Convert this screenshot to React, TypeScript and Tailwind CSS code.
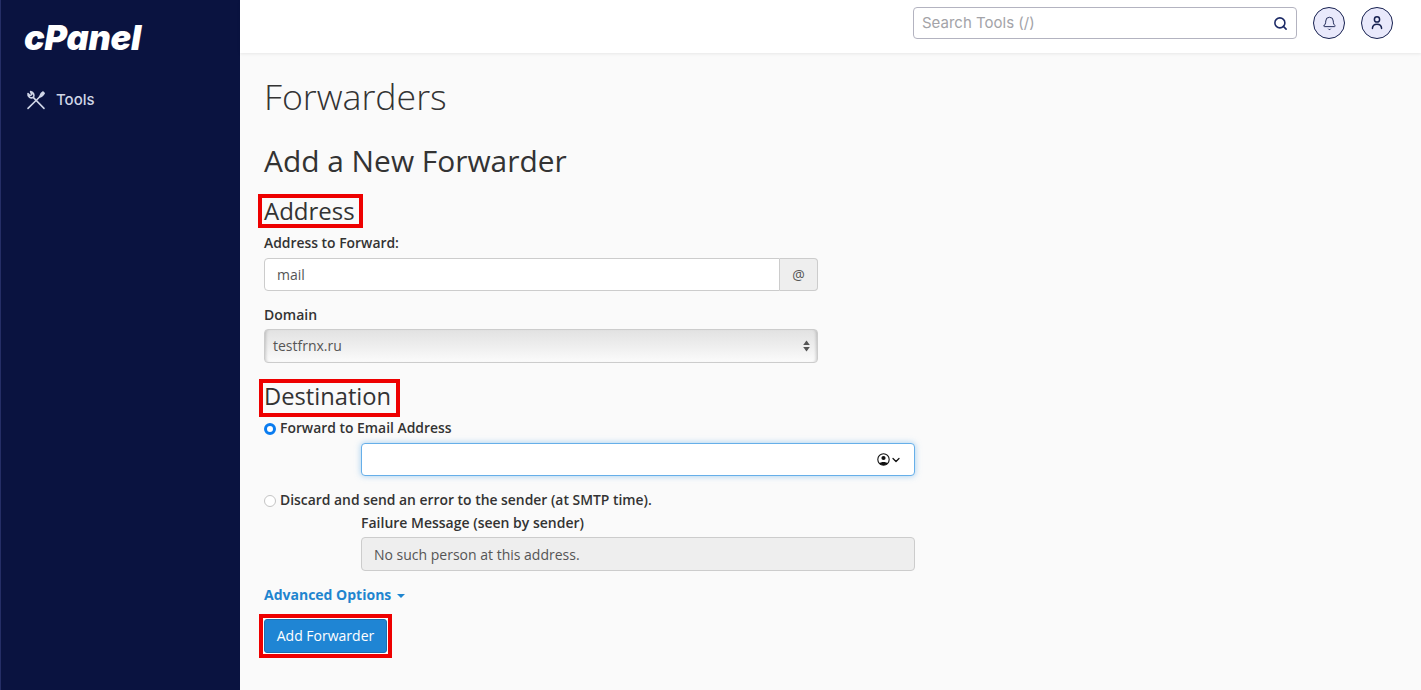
import { Search, Bell, ChevronDown } from "lucide-react";

const openSans = "font-['Open_Sans',sans-serif]";

function ToolsIcon() {
  return (
    <svg width="20" height="20" viewBox="0 0 20 20" fill="none" stroke="#cfd5e6" strokeWidth="1.6" strokeLinecap="round" strokeLinejoin="round">
      <path d="M7.2 7.4 L18 18.4" />
      <path d="M2 3.6 C1.4 7 5 8.8 7.2 7.4 C8.8 5.8 7.8 2.2 4.6 1.6 L5.8 4.6 L4 5.6 Z" />
      <path d="M2 18.4 L13.6 7" />
      <path d="M13.6 7 C14 4.6 15.4 2.8 17 2 L18.2 3.2 C17.4 5 15.8 6.6 13.6 7 Z" fill="#cfd5e6" />
    </svg>
  );
}

function UserIcon() {
  return (
    <svg width="16" height="16" viewBox="0 0 16 16" fill="none" stroke="#16204f" strokeWidth="1.5" strokeLinecap="round">
      <circle cx="8" cy="4.4" r="2.6" />
      <path d="M3.4 13.4 C3.6 10.2 5.4 9.2 8 9.2 C10.6 9.2 12.4 10.2 12.6 13.4" />
    </svg>
  );
}

function ContactIcon() {
  return (
    <svg width="13" height="13" viewBox="0 0 13 13">
      <circle cx="6.5" cy="6.5" r="5.7" fill="none" stroke="#111" strokeWidth="1.1" />
      <circle cx="6.5" cy="5" r="2.1" fill="#111" />
      <path d="M2.4 10.4 C3.4 8.4 9.6 8.4 10.6 10.4 C9 12.4 4 12.4 2.4 10.4 Z" fill="#111" />
    </svg>
  );
}

function Highlighted({ children, className }: { children: React.ReactNode; className: string }) {
  return <div className={`border-4 border-[#ee0000] ${className}`}>{children}</div>;
}

export default function App() {
  return (
    <div className={`flex h-[690px] w-[1421px] overflow-hidden bg-[#fafafa] ${openSans}`}>
      <aside className="w-[240px] shrink-0 border-l border-[#252e66] bg-[#0a1340] pl-[23px] font-['Inter',sans-serif]">
        <div className="mt-[18px] h-10 text-[34.4px] leading-10 font-black italic tracking-[-0.2px] text-white">cPanel</div>
        <div className="mt-[32px] flex h-5 items-center gap-[10px] pl-[2px] text-[15px] font-medium text-[#cfd5e6]">
          <ToolsIcon />
          <span>Tools</span>
        </div>
      </aside>

      <div className="flex min-w-0 flex-1 flex-col">
        <header className="flex h-[53px] shrink-0 items-center justify-end bg-white pr-7 pb-[7px] font-['Inter',sans-serif] shadow-[0_1px_3px_rgba(0,0,0,0.08)]">
          <div className="flex h-[32px] w-[384px] items-center justify-between rounded-[4px] border border-[#b3b3c0] pt-px pr-2 pl-2 text-[15px] text-[#a3a3a8]">
            <span>Search Tools (/)</span>
            <Search size={15} strokeWidth={2.5} color="#1c2a66" />
          </div>
          <div className="ml-[16px] flex h-8 w-8 items-center justify-center rounded-full border border-[#16204f] bg-[#e9e9fb]">
            <Bell size={15} strokeWidth={1.5} color="#16204f" />
          </div>
          <div className="ml-[16px] flex h-8 w-8 items-center justify-center rounded-full border border-[#16204f] bg-[#e9e9fb]">
            <UserIcon />
          </div>
        </header>

        <main className="flex-1 pl-6 text-[#333]">
          <h1 className="mt-[19px] h-[50px] text-[35.7px] leading-[48px] font-light text-[#333]">Forwarders</h1>
          <h2 className="mt-[19px] h-10 text-[29.9px] leading-10 font-normal text-[#333]">Add a New Forwarder</h2>

          <Highlighted className="-ml-[6px] mt-[13px] h-[34px] w-[105px] pl-[2px]">
            <h3 className="text-[24px] leading-[26px] text-[#333]">Address</h3>
          </Highlighted>

          <label className="mt-[5px] block h-5 text-[13.9px] leading-5 font-semibold">Address to Forward:</label>
          <div className="mt-[5px] flex h-[33px] w-[554px]">
            <input
              readOnly
              value="mail"
              className="min-w-0 flex-1 rounded-l-[4px] border border-[#ccc] bg-white px-3 text-sm text-[#555] outline-none"
            />
            <span className="flex w-[38px] items-center justify-center rounded-r-[4px] border border-l-0 border-[#ccc] bg-[#eee] text-sm text-[#555]">@</span>
          </div>

          <label className="mt-[14px] block h-5 text-sm leading-5 font-semibold">Domain</label>
          <div className="relative mt-1 flex h-[34px] w-[554px] items-center justify-between rounded-[4px] border border-[#ccc] bg-[linear-gradient(180deg,#e2e2e2,#eeeeee_50%,#fbfbfb)] pr-[7px] pl-2 text-sm text-[#555] shadow-[inset_3px_0_3px_-2px_rgba(0,0,0,0.18),inset_-3px_0_3px_-2px_rgba(0,0,0,0.18)]">
            <span>testfrnx.ru</span>
            <svg width="7" height="12" viewBox="0 0 7 12" fill="#555">
              <path d="M3.5 0.5 L6.8 5 L0.2 5 Z" />
              <path d="M3.5 11.5 L6.8 7 L0.2 7 Z" />
            </svg>
          </div>

          <Highlighted className="-ml-[5px] mt-4 h-[38px] w-[141px] pl-[1px]">
            <h3 className="text-[23.7px] leading-[26px] text-[#333]">Destination</h3>
          </Highlighted>

          <div className="mt-[1px] flex h-5 items-center gap-1 text-[13.9px] font-semibold">
            <span className="mt-[1px] h-3 w-3 rounded-full border-[3.5px] border-[#0a7cf0] bg-white" />
            <span>Forward to Email Address</span>
          </div>
          <div className="mt-[5px] ml-[97px] flex h-[33px] w-[554px] items-center justify-end rounded-[4px] border border-[#66afe9] bg-white pr-[12px] shadow-[0_0_6px_rgba(102,175,233,0.6)]">
            <ContactIcon />
            <ChevronDown size={12} strokeWidth={2.5} color="#111" />
          </div>

          <div className="mt-[14px] flex h-5 items-center gap-1 text-[13.9px] font-semibold">
            <span className="mt-[1px] h-3 w-3 rounded-full border border-[#c4c4c4] bg-white" />
            <span>Discard and send an error to the sender (at SMTP time).</span>
          </div>
          <label className="mt-[3px] ml-[97px] block h-5 text-sm leading-5 font-semibold">Failure Message (seen by sender)</label>
          <input
            readOnly
            value="No such person at this address."
            className="mt-1 ml-[97px] block h-[34px] w-[554px] rounded-[4px] border border-[#ccc] bg-[#eee] px-3 text-sm text-[#555] outline-none"
          />

          <div className="mt-[14px] flex h-5 items-center gap-[6px] text-sm font-bold text-[#1f85cf]">
            <span>Advanced Options</span>
            <span className="mt-[1px] h-0 w-0 border-x-4 border-t-4 border-x-transparent border-t-[#1f85cf]" />
          </div>

          <Highlighted className="-ml-[5px] mt-[9px] h-[44px] w-[133px] pl-px">
            <button className="h-[34px] w-[123px] translate-y-px rounded-[3px] border border-[#1a6fb0] bg-[#1f85d4] text-sm font-medium text-white shadow-[0_0_0_1px_#fff]">
              Add Forwarder
            </button>
          </Highlighted>
        </main>
      </div>
    </div>
  );
}
